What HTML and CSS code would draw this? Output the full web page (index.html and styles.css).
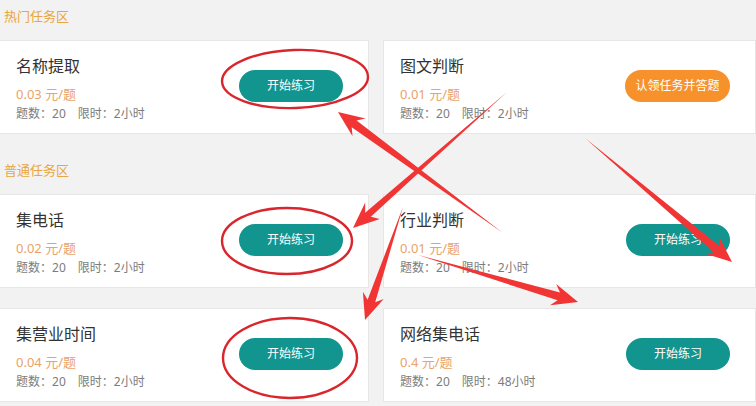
FILE: index.html
```html
<!DOCTYPE html>
<html lang="zh-CN">
<head>
<meta charset="utf-8">
<title>任务区</title>
<link rel="stylesheet" href="styles.css">
</head>
<body>
<div class="page">
  <section class="zone">
    <h2 class="zone-title">热门任务区</h2>
    <div class="grid">
      <div class="card">
        <div class="info">
          <div class="name">名称提取</div>
          <div class="price">0.03 元/题</div>
          <div class="meta">题数<span class="colon">：</span>20　限时<span class="colon">：</span>2小时</div>
        </div>
        <button class="btn btn-teal">开始练习</button>
      </div>
      <div class="card">
        <div class="info">
          <div class="name">图文判断</div>
          <div class="price">0.01 元/题</div>
          <div class="meta">题数<span class="colon">：</span>20　限时<span class="colon">：</span>2小时</div>
        </div>
        <button class="btn btn-orange">认领任务并答题</button>
      </div>
    </div>
  </section>
  <section class="zone zone-next">
    <h2 class="zone-title">普通任务区</h2>
    <div class="grid">
      <div class="card">
        <div class="info">
          <div class="name">集电话</div>
          <div class="price">0.02 元/题</div>
          <div class="meta">题数<span class="colon">：</span>20　限时<span class="colon">：</span>2小时</div>
        </div>
        <button class="btn btn-teal">开始练习</button>
      </div>
      <div class="card">
        <div class="info">
          <div class="name">行业判断</div>
          <div class="price">0.01 元/题</div>
          <div class="meta">题数<span class="colon">：</span>20　限时<span class="colon">：</span>2小时</div>
        </div>
        <button class="btn btn-teal">开始练习</button>
      </div>
      <div class="card">
        <div class="info">
          <div class="name">集营业时间</div>
          <div class="price">0.04 元/题</div>
          <div class="meta">题数<span class="colon">：</span>20　限时<span class="colon">：</span>2小时</div>
        </div>
        <button class="btn btn-teal">开始练习</button>
      </div>
      <div class="card">
        <div class="info">
          <div class="name">网络集电话</div>
          <div class="price">0.4 元/题</div>
          <div class="meta">题数<span class="colon">：</span>20　限时<span class="colon">：</span>48小时</div>
        </div>
        <button class="btn btn-teal">开始练习</button>
      </div>
    </div>
  </section>

  <svg class="marks" width="756" height="406" viewBox="0 0 756 406" aria-hidden="true">
    <g fill="none" stroke="#d9262c" stroke-width="2.4">
      <ellipse cx="295" cy="79" rx="73" ry="29" transform="rotate(-2 295 79)"/>
      <ellipse cx="287" cy="241" rx="65" ry="33"/>
      <ellipse cx="290" cy="358" rx="67" ry="40"/>
    </g>
    <g fill="#f03534">
      <polygon points="507,92 365.2,212.8 365.2,202.5 353,228 379.8,219.0 370.8,216.8"/>
      <polygon points="503,233 356.6,120.4 365.5,118.5 338,112 352.5,136.3 351.7,127.2"/>
      <polygon points="585,138 714.0,252.4 705.0,253.6 732,262 719.2,236.8 719.4,246.0"/>
      <polygon points="403,207 367.6,299.7 362.9,291.8 365,320 383.7,298.9 375.2,302.3"/>
      <polygon points="418,255 557.6,300.2 550.0,305.2 578,302 556.2,284.1 560.0,292.5"/>
    </g>
  </svg>
</div>
</body>
</html>
```

FILE: styles.css
```css
html, body {
  margin: 0;
  padding: 0;
}
body {
  background: #f2f2f2;
  font-family: "Noto Sans", "Noto Sans CJK SC", sans-serif;
  color: #333;
}
.page {
  position: relative;
  width: 756px;
  height: 406px;
  overflow: hidden;
}
.zone-title {
  margin: 0;
  height: 40px;
  box-sizing: border-box;
  padding: 8px 0 0 4px;
  font-size: 13px;
  line-height: 16px;
  font-weight: normal;
  color: #e8a640;
}
.zone-next {
  margin-top: 20px;
}
.grid {
  display: grid;
  grid-template-columns: 369px 1fr;
  column-gap: 14px;
  row-gap: 20px;
}
.card {
  background: #fff;
  border: 1px solid #e6e6e6;
  height: 94px;
  box-sizing: border-box;
  display: flex;
  align-items: center;
  justify-content: space-between;
  padding: 0 25px 0 16px;
}
.grid .card:nth-child(odd) {
  border-left: 0;
}
.info {
  align-self: flex-start;
  padding-top: 15px;
}
.name {
  font-size: 16px;
  line-height: 20px;
  color: #333;
}
.price {
  margin-top: 9px;
  font-size: 13px;
  line-height: 18px;
  color: #e9a36c;
}
.meta {
  margin-top: 2px;
  font-size: 12px;
  line-height: 16px;
  color: #7c7c7c;
}
.colon {
  font-family: "Noto Sans CJK TC", "Noto Sans CJK SC", sans-serif;
}
.btn {
  border: 0;
  width: 104px;
  height: 32px;
  border-radius: 16px;
  color: #fff;
  font-family: "Noto Sans", "Noto Sans CJK SC", sans-serif;
  font-size: 12px;
  line-height: 32px;
  padding: 0;
  margin-top: -2px;
}
.btn-teal {
  background: #12958f;
}
.btn-orange {
  background: #f7912b;
  width: 105px;
}
.marks {
  position: absolute;
  left: 0;
  top: 0;
  pointer-events: none;
}
```
